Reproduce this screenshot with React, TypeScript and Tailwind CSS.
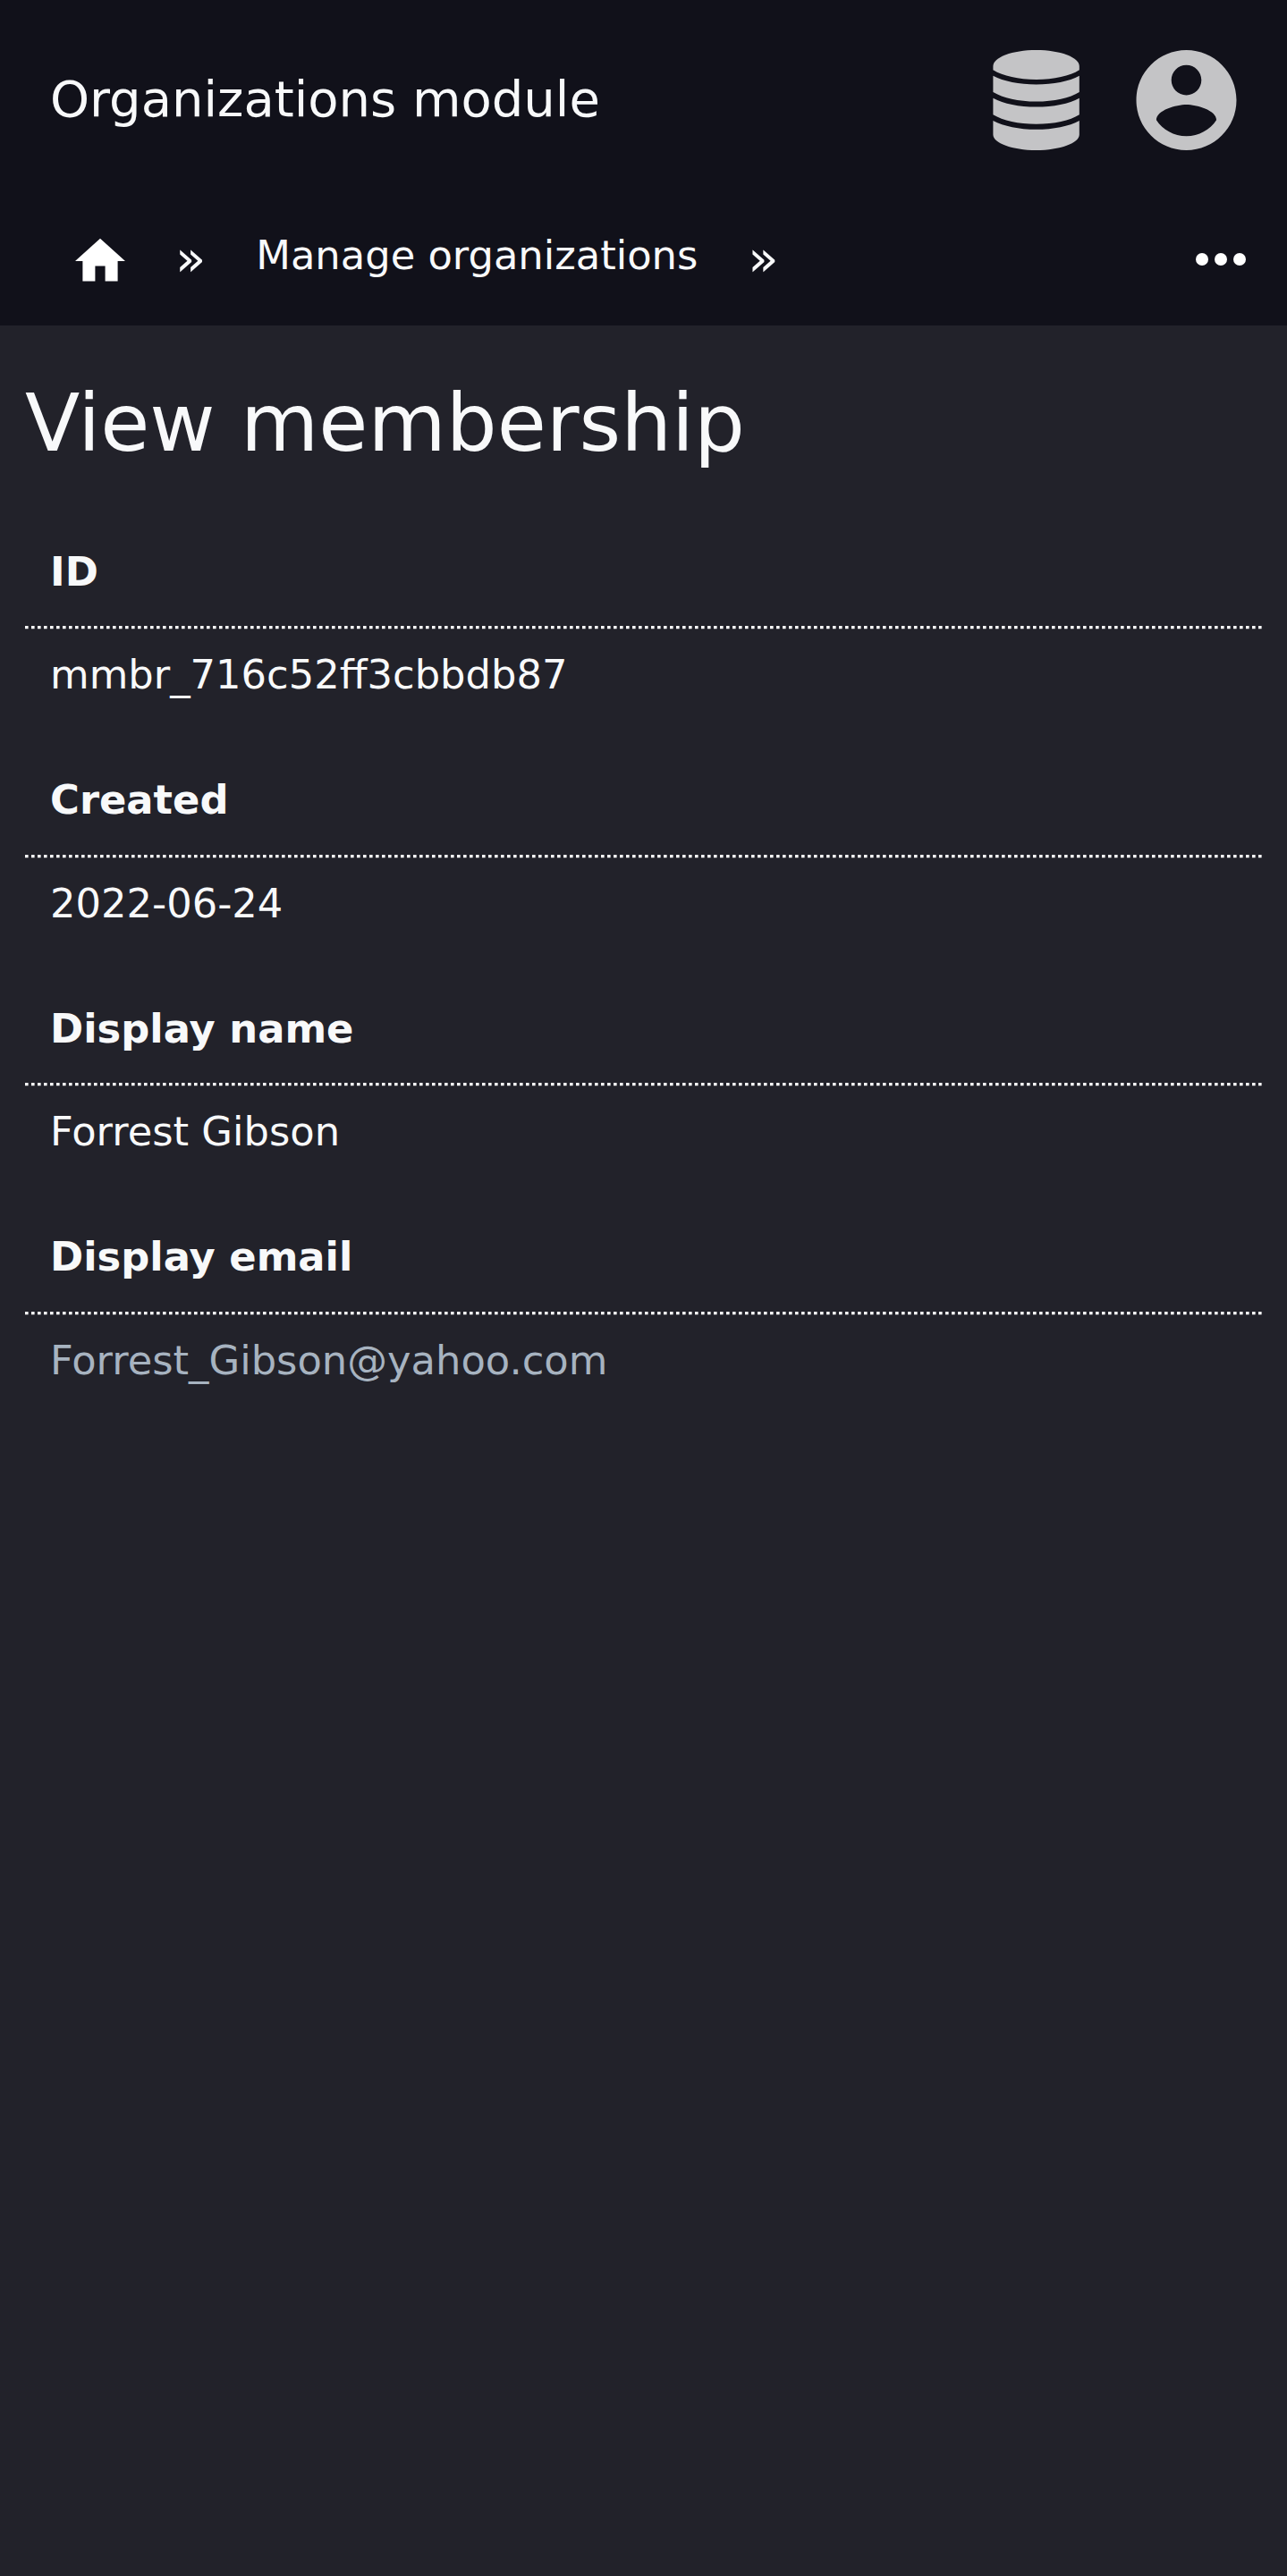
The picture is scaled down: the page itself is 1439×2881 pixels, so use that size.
import React from "react";

const fields = [
  { label: "ID", value: "mmbr_716c52ff3cbbdb87", height: "h-[256px]", pad: "pt-[26px]" },
  { label: "Created", value: "2022-06-24", height: "h-[255px]", pad: "pt-[25px]" },
  { label: "Display name", value: "Forrest Gibson", height: "h-[256px]", pad: "pt-[26px]" },
  { label: "Display email", value: "Forrest_Gibson@yahoo.com", height: "h-[255px]", pad: "pt-[25px]", link: true },
];

function DatabaseIcon() {
  return (
    <svg className="h-[112px] w-[97px]" viewBox="-0.4 0 97 112" fill="currentColor">
      <path d="M0 18C0 8 21.5 0 48.2 0S96.4 8 96.4 18V22.3C86 29 68 33 48.2 33S11 29 0 22.3Z" />
      <path d="M0 28.7C12 35 29 38.4 48.2 38.4S85 35 96.4 28.7V47C86 53.6 68 57.6 48.2 57.6S11 53.6 0 47Z" />
      <path d="M0 53.7C12 60 29 63.6 48.2 63.6S85 60 96.4 53.7V72.2C86 78.8 68 82.7 48.2 82.7S11 78.8 0 72.2Z" />
      <path d="M0 79C12 85.2 29 88.8 48.2 88.8S85 85.2 96.4 79V94.5C96.4 104 75 112 48.2 112S0 104 0 94.5Z" />
    </svg>
  );
}

function AccountIcon() {
  return (
    <svg className="h-[112px] w-[112px] overflow-visible" viewBox="2.09 2 20 20" fill="currentColor">
      <path d="M12 2C6.48 2 2 6.48 2 12s4.48 10 10 10 10-4.48 10-10S17.52 2 12 2zm0 3c1.66 0 3 1.34 3 3s-1.34 3-3 3-3-1.34-3-3 1.34-3 3-3zm0 14.2c-2.5 0-4.71-1.28-6-3.22.03-1.99 4-3.08 6-3.08 1.99 0 5.97 1.09 6 3.08-1.29 1.94-3.5 3.22-6 3.22z" />
    </svg>
  );
}

function HomeIcon() {
  return (
    <svg className="mt-[34px] h-[68px] w-[68px]" viewBox="0 0 68 68" fill="currentColor">
      <path transform="translate(.4 .4) scale(2.8)" d="M10 20v-6h4v6h5v-8h3L12 3 2 12h3v8z" />
    </svg>
  );
}

function MoreIcon() {
  return (
    <svg className="h-[14px] w-[56px]" viewBox="4 10 16 4" fill="currentColor">
      <circle cx="6" cy="12" r="2" />
      <circle cx="12" cy="12" r="2" />
      <circle cx="18" cy="12" r="2" />
    </svg>
  );
}

function DottedRule() {
  return (
    <svg className="block h-[4px] w-full text-white">
      <line x1="0" x2="1383" y1="1.65" y2="1.65" stroke="currentColor" strokeWidth="3.3" strokeDasharray="3.6 3.4" />
    </svg>
  );
}

export default function App() {
  return (
    <div className="min-h-[2881px] bg-[#22222a] font-['DejaVu_Sans',sans-serif] text-[44.8px] text-[#f8f9fa]">
      <header className="h-[364px] bg-[#11111a]">
        <div className="flex h-[224px] items-center justify-between px-[56px]">
          <div className="pb-[4px] text-[56px] leading-[65px]">Organizations module</div>
          <div className="flex gap-[64px] text-[#c4c4c6]">
            <DatabaseIcon />
            <AccountIcon />
          </div>
        </div>
        <nav className="flex h-[140px] items-start pr-[46px] pl-[78px] text-white">
          <HomeIcon />
          <span className="ml-[50px] pt-[32px] text-[56px] leading-[65px] text-[#f8f9fa]">»</span>
          <span className="ml-[56px] pt-[36px] leading-[52px] text-[#f8f9fa]">Manage organizations</span>
          <span className="ml-[56px] pt-[32px] text-[56px] leading-[65px] text-[#f8f9fa]">»</span>
          <button className="mt-[59px] ml-auto flex" aria-label="More">
            <MoreIcon />
          </button>
        </nav>
      </header>
      <main className="px-[28px] pt-[56px]">
        <h1 className="h-[168px] text-[89.6px] leading-[106px]">View membership</h1>
        <dl>
          {fields.map((f) => (
            <div key={f.label} className={f.height}>
              <dt className={`h-[112px] px-[28px] leading-[52px] font-bold ${f.pad}`}>{f.label}</dt>
              <DottedRule />
              <dd className="px-[28px] pt-[25px] leading-[52px]">
                {f.link ? <a className="text-[#a7b3c0]">{f.value}</a> : f.value}
              </dd>
            </div>
          ))}
        </dl>
      </main>
    </div>
  );
}
